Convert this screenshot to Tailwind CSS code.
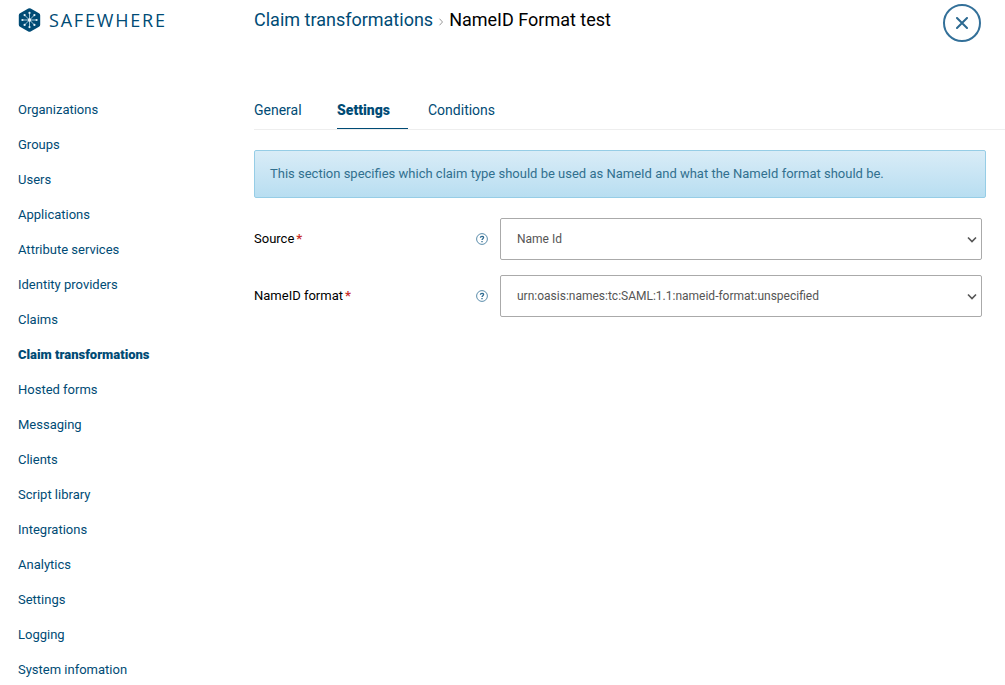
<!doctype html>
<html lang="en">
    <head>
        <meta charset="UTF-8" />
        <meta name="viewport" content="width=device-width, initial-scale=1.0" />
        <title>Safewhere - Claim transformations</title>
        <script src="https://cdn.jsdelivr.net/npm/@tailwindcss/browser@4"></script>
    </head>
    <body
        class="min-h-screen bg-white font-['Roboto',sans-serif] text-[13px] leading-5 text-[#004b75]"
    >
        <header class="flex h-20 items-start">
            <a
                href="#"
                class="flex h-10 w-[254px] shrink-0 items-center gap-2 pl-[18px]"
            >
                <svg class="h-6 w-[23px]" viewBox="0 0 23 24" fill="none">
                    <path
                        d="M10.3.5a2.4 2.4 0 0 1 2.4 0l8.3 4.8a2.4 2.4 0 0 1 1.2 2v9.4a2.4 2.4 0 0 1-1.2 2l-8.3 4.8a2.4 2.4 0 0 1-2.4 0L2 18.7a2.4 2.4 0 0 1-1.2-2V7.3A2.4 2.4 0 0 1 2 5.3Z"
                        fill="#004b75"
                    />
                    <path
                        d="M11.5 5v14M4.5 12h14M6.6 7.1l9.8 9.8M16.4 7.1l-9.8 9.8"
                        stroke="#9fc3d6"
                    />
                    <g fill="#e4f1f7">
                        <circle cx="11.5" cy="4.9" r="1.1" />
                        <circle cx="11.5" cy="19.1" r="1.1" />
                        <circle cx="4.4" cy="12" r="1.1" />
                        <circle cx="18.6" cy="12" r="1.1" />
                        <circle cx="6.6" cy="7.1" r="1.1" />
                        <circle cx="16.4" cy="7.1" r="1.1" />
                        <circle cx="6.6" cy="16.9" r="1.1" />
                        <circle cx="16.4" cy="16.9" r="1.1" />
                        <circle cx="11.5" cy="12" r="1.7" />
                    </g>
                </svg>
                <span
                    class="font-['Open_Sans',sans-serif] text-lg leading-6 tracking-widest"
                    >SAFEWHERE</span
                >
            </a>
            <h1 class="flex h-10 grow items-center gap-1 text-lg">
                <a href="#">Claim transformations</a>
                <svg
                    class="mt-1 size-2"
                    viewBox="0 0 8 8"
                    fill="none"
                    stroke="#999999"
                >
                    <path d="M2.5.7 5.500 4l-3 3.300" />
                </svg>
                <span class="text-black">NameID Format test</span>
            </h1>
            <button
                type="button"
                aria-label="Close"
                class="mt-1 mr-6 flex size-[38px] items-center justify-center rounded-full border-2 border-[#337099]"
            >
                <svg
                    class="size-3"
                    viewBox="0 0 12 12"
                    fill="none"
                    stroke="#2d6a91"
                    stroke-width="2"
                    stroke-linecap="round"
                >
                    <path d="m1 1 10 10M11 1 1 11" />
                </svg>
            </button>
        </header>
        <div class="flex">
            <nav class="w-[254px] shrink-0 pt-5 pl-[18px]">
                <ul class="flex flex-col gap-[15px]">
                    <li><a href="#">Organizations</a></li>
                    <li><a href="#">Groups</a></li>
                    <li><a href="#">Users</a></li>
                    <li><a href="#">Applications</a></li>
                    <li><a href="#">Attribute services</a></li>
                    <li><a href="#">Identity providers</a></li>
                    <li><a href="#">Claims</a></li>
                    <li>
                        <a href="#" class="font-black">Claim transformations</a>
                    </li>
                    <li><a href="#">Hosted forms</a></li>
                    <li><a href="#">Messaging</a></li>
                    <li><a href="#">Clients</a></li>
                    <li><a href="#">Script library</a></li>
                    <li><a href="#">Integrations</a></li>
                    <li><a href="#">Analytics</a></li>
                    <li><a href="#">Settings</a></li>
                    <li><a href="#">Logging</a></li>
                    <li><a href="#">System infomation</a></li>
                </ul>
            </nav>
            <main class="grow pt-5">
                <div
                    class="flex h-[30px] border-b border-[#eeeeee] text-sm leading-5"
                >
                    <a href="#" class="w-[83px]">General</a>
                    <a
                        href="#"
                        class="mr-5 h-[29px] w-[71px] border-b border-[#004b75] font-black"
                        >Settings</a
                    >
                    <a href="#">Conditions</a>
                </div>
                <p
                    class="mt-5 mr-[19px] flex h-12 items-center rounded-xs border border-[#96cde6] bg-linear-to-b from-[#d9ecf7] to-[#b8def1] px-[15px] text-[#31708f]"
                >
                    This section specifies which claim type should be used as
                    NameId and what the NameId format should be.
                </p>
                <form class="mt-5 mr-[23px] flex flex-col gap-[15px]">
                    <div class="flex h-[42px] items-center">
                        <label for="source" class="grow text-black"
                            >Source<span class="ml-0.5 font-bold text-[#c9302c]"
                                >*</span
                            ></label
                        >
                        <button type="button" aria-label="Help" class="mr-3">
                            <svg class="size-3" viewBox="0 0 12 12" fill="none">
                                <circle cx="6" cy="6" r="5.4" stroke="#5b8dab" />
                                <path
                                    d="M4.4 4.8c0-2 3.2-1.9 3.2-.2C7.6 5.7 6 5.7 6 7M6 8.1v1.2"
                                    stroke="#2d6a91"
                                    stroke-width="1.3"
                                />
                            </svg>
                        </button>
                        <div class="relative h-full w-[482px]">
                            <select
                                id="source"
                                class="h-full w-full appearance-none rounded-xs border border-[#aaaaaa] bg-white px-4 text-xs text-[#555555]"
                            >
                                <option>Name Id</option>
                            </select>
                            <svg
                                class="pointer-events-none absolute top-[18px] right-[5px] h-2 w-2.5"
                                viewBox="0 0 10 8"
                                fill="none"
                                stroke="#555555"
                                stroke-width="1.6"
                            >
                                <path d="m1 1.5 4 4 4-4" />
                            </svg>
                        </div>
                    </div>
                    <div class="flex h-[42px] items-center">
                        <label for="format" class="grow text-black"
                            >NameID format<span
                                class="ml-0.5 font-bold text-[#c9302c]"
                                >*</span
                            ></label
                        >
                        <button type="button" aria-label="Help" class="mr-3">
                            <svg class="size-3" viewBox="0 0 12 12" fill="none">
                                <circle cx="6" cy="6" r="5.4" stroke="#5b8dab" />
                                <path
                                    d="M4.4 4.8c0-2 3.2-1.9 3.2-.2C7.6 5.7 6 5.7 6 7M6 8.1v1.2"
                                    stroke="#2d6a91"
                                    stroke-width="1.3"
                                />
                            </svg>
                        </button>
                        <div class="relative h-full w-[482px]">
                            <select
                                id="format"
                                class="h-full w-full appearance-none rounded-xs border border-[#aaaaaa] bg-white px-4 text-xs text-[#555555]"
                            >
                                <option>
                                    urn:oasis:names:tc:SAML:1.1:nameid-format:unspecified
                                </option>
                            </select>
                            <svg
                                class="pointer-events-none absolute top-[18px] right-[5px] h-2 w-2.5"
                                viewBox="0 0 10 8"
                                fill="none"
                                stroke="#555555"
                                stroke-width="1.6"
                            >
                                <path d="m1 1.5 4 4 4-4" />
                            </svg>
                        </div>
                    </div>
                </form>
            </main>
        </div>
    </body>
</html>
